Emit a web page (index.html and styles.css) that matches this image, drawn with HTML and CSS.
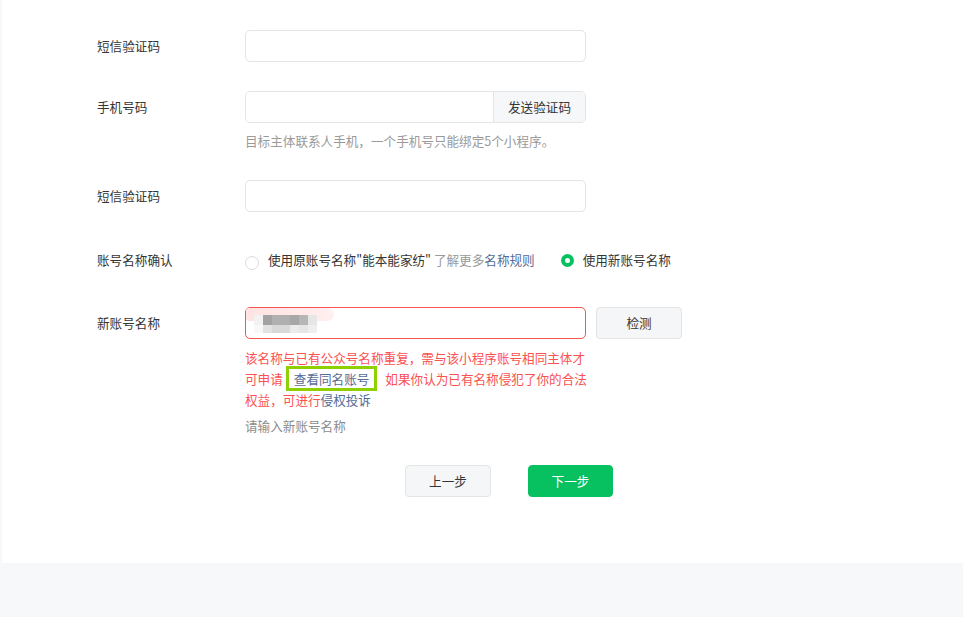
FILE: index.html
```html
<!DOCTYPE html>
<html lang="zh-CN">
<head>
<meta charset="utf-8">
<title>账号信息</title>
<link rel="stylesheet" href="styles.css">
</head>
<body>
<div class="card">
  <div class="field">
    <div class="label">短信验证码</div>
    <div class="control">
      <input class="input" type="text">
    </div>
  </div>

  <div class="field f-phone">
    <div class="label">手机号码</div>
    <div class="control">
      <div class="group">
        <input class="group-input" type="text">
        <div class="group-btn">发送验证码</div>
      </div>
      <div class="tip">目标主体联系人手机，一个手机号只能绑定5个小程序。</div>
    </div>
  </div>

  <div class="field f-sms2">
    <div class="label">短信验证码</div>
    <div class="control">
      <input class="input" type="text">
    </div>
  </div>

  <div class="field f-radio">
    <div class="label label-radio">账号名称确认</div>
    <div class="control radios">
      <label class="radio">
        <span class="dot dot-off"></span>
        <span class="radio-text">使用原账号名称"能本能家纺" <span class="muted">了解更多</span><span class="link">名称规则</span></span>
      </label>
      <label class="radio radio-on">
        <span class="dot dot-on"></span>
        <span class="radio-text">使用新账号名称</span>
      </label>
    </div>
  </div>

  <div class="field f-name">
    <div class="label">新账号名称</div>
    <div class="control">
      <div class="name-row">
        <div class="name-wrap">
          <input class="input input-error" type="text">
          <div class="blur-pink"></div>
          <div class="mosaic">
            <i style="background:#f2f2f2"></i><i style="background:#a2a2a2"></i><i style="background:#b0b0b0"></i><i style="background:#afafaf"></i><i style="background:#a7a7a7"></i><i style="background:#b6b6b6"></i><i style="background:#e6e6e6"></i>
            <i style="background:#f8f8f8"></i><i style="background:#e2e2e2"></i><i style="background:#d8d8d8"></i><i style="background:#d9d9d9"></i><i style="background:#ebebeb"></i><i style="background:#e6e6e6"></i><i style="background:#efefef"></i>
          </div>
        </div>
        <div class="btn btn-check">检测</div>
      </div>
      <div class="error">该名称与已有公众号名称重复，需与该小程序账号相同主体才<br>可申请<span class="hl">查看同名账号</span>如果你认为已有名称侵犯了你的合法<br>权益，可进行<span class="link">侵权投诉</span></div>
      <div class="tip tip2">请输入新账号名称</div>
    </div>
  </div>

  <div class="actions">
    <div class="btn btn-prev">上一步</div>
    <div class="btn btn-next">下一步</div>
  </div>
</div>
</body>
</html>
```

FILE: styles.css
```css
* { box-sizing: border-box; }
html, body {
  margin: 0;
  padding: 0;
  background: #f7f8fa;
}
body {
  font-family: "Noto Sans CJK SC", "Noto Sans", sans-serif;
  font-size: 12.6px;
  color: #353535;
}
.card {
  margin-left: 2px;
  background: #fff;
  padding: 30px 0 66px 95px;
  height: 563px;
}
.field {
  display: grid;
  grid-template-columns: 148px 1fr;
  align-items: start;
}
.label {
  line-height: 32px;
  color: #353535;
}
.f-phone { margin-top: 29px; }
.f-sms2 { margin-top: 30px; }
.f-radio { margin-top: 38px; }
.f-name { margin-top: 37px; }

.input {
  display: block;
  width: 341px;
  height: 32px;
  border: 1px solid #e4e4e4;
  border-radius: 5px;
  background: #fff;
  outline: none;
  padding: 0 12px;
  font: inherit;
}
.input-error { border-color: #fa5151; }

.group {
  display: flex;
  width: 341px;
  height: 32px;
  border: 1px solid #e4e4e4;
  border-radius: 5px;
  overflow: hidden;
}
.group-input {
  flex: 1;
  min-width: 0;
  border: 0;
  outline: none;
  font: inherit;
  padding: 0 12px;
}
.group-btn {
  width: 92px;
  background: #f6f7f9;
  border-left: 1px solid #e4e4e4;
  text-align: center;
  line-height: 30px;
  color: #353535;
}
.tip {
  margin-top: 9px;
  line-height: 18px;
  color: #9a9a9a;
}
.tip2 {
  margin-top: 7px;
  color: #8c8c8c;
}

.label-radio { line-height: 20px; }
.radios {
  display: flex;
  align-items: center;
  height: 20px;
}
.radio {
  display: flex;
  align-items: center;
}
.radio-on { margin-left: 26px; }
.dot {
  width: 14px;
  height: 14px;
  border-radius: 50%;
  margin-right: 9px;
  flex: none;
}
.dot-off {
  border: 1px solid #dcdcdc;
  margin-top: 6px;
}
.dot-on {
  background: #07c160;
  position: relative;
  width: 13px;
  height: 13px;
}
.dot-on::after {
  content: "";
  position: absolute;
  left: 4px;
  top: 4px;
  width: 5px;
  height: 5px;
  border-radius: 50%;
  background: #fff;
}
.radio-text { line-height: 20px; color: #353535; }
.muted { color: #9a9a9a; }
.link { color: #576b95; }

.name-row {
  display: flex;
  align-items: center;
}
.name-wrap {
  position: relative;
  width: 341px;
}
.blur-pink {
  position: absolute;
  left: 1px;
  top: 1px;
  width: 88px;
  height: 13px;
  border-radius: 4px 8px 8px 4px;
  background: linear-gradient(90deg, #ffe3e3 0%, #ffeaea 70%, #fff0f0 100%);
}
.mosaic {
  position: absolute;
  left: 9px;
  top: 8px;
  display: grid;
  grid-template-columns: repeat(7, 9px);
  grid-template-rows: 10px 8px;
}
.mosaic i { display: block; }

.btn {
  height: 32px;
  line-height: 30px;
  text-align: center;
  border-radius: 4px;
  border: 1px solid #e4e4e4;
  background: #f5f6f7;
  color: #353535;
}
.btn-check {
  width: 86px;
  margin-left: 10px;
}

.error {
  margin-top: 8px;
  width: 360px;
  line-height: 21px;
  color: #fa5151;
  white-space: nowrap;
}
.hl {
  color: #576b95;
  border: 3px solid #8fd000;
  padding: 0 5px;
  margin: 0 8px 0 3px;
}

.actions {
  display: flex;
  margin-top: 30px;
  padding-left: 308px;
  gap: 37px;
}
.btn-prev { width: 86px; }
.btn-next {
  width: 85px;
  background: #07c160;
  border-color: #07c160;
  color: #fff;
}
```
